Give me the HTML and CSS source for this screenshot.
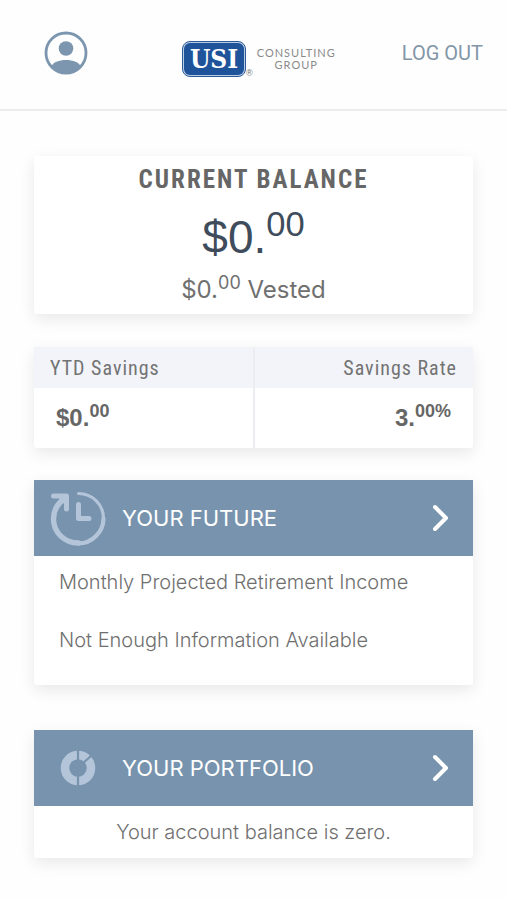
FILE: index.html
```html
<!DOCTYPE html>
<html lang="en">
<head>
<meta charset="utf-8">
<meta name="viewport" content="width=device-width, initial-scale=1">
<title>Account Summary</title>
<link rel="stylesheet" href="styles.css">
</head>
<body>
<header class="topbar">
  <a class="profile" href="#" aria-label="Profile">
    <svg viewBox="0 0 44 44" width="44" height="44" aria-hidden="true">
      <defs><clipPath id="disc"><circle cx="22" cy="22" r="20"/></clipPath></defs>
      <circle cx="22" cy="22" r="20" fill="none" stroke="#7b96ae" stroke-width="2.800"/>
      <circle cx="22" cy="17.500" r="7.300" fill="#7b96ae"/>
      <path clip-path="url(#disc)" fill="#7b96ae" d="M7 36C9 31 15 29 22 29S35 31 37 36V44H7Z"/>
    </svg>
  </a>
  <a class="brand" href="#">
    <span class="badge"><span class="badge-text">USI</span></span>
    <span class="mark">®</span>
    <span class="brand-name">CONSULTING<br>GROUP</span>
  </a>
  <a class="logout" href="#">LOG OUT</a>
</header>
<main class="content">
  <section class="card balance">
    <h1 class="balance-title">CURRENT BALANCE</h1>
    <p class="amount">$0.<span class="cents">00</span></p>
    <p class="vested">$0.<span class="cents">00</span> Vested</p>
  </section>
  <table class="card savings">
    <thead><tr><th scope="col">YTD Savings</th><th scope="col">Savings Rate</th></tr></thead>
    <tbody><tr><td>$0.<span class="cents">00</span></td><td>3.<span class="cents">00%</span></td></tr></tbody>
  </table>
  <section class="card future">
    <a class="panel-head" href="#">
      <span class="panel-icon">
        <svg viewBox="1 2 60 60" width="60" height="60" fill="none" stroke="#b4c5d9" stroke-linecap="round" stroke-linejoin="round" aria-hidden="true">
          <path stroke-width="3.200" d="M31.500 7.500C45 7.500 56.500 18 56.500 32.500"/>
          <path stroke-width="4.200" d="M56.500 32.500C56.500 46 45 57.500 31.500 57.500"/>
          <path stroke-width="5.400" d="M31.500 57C17 57 6.500 46 6.500 33C6.500 25 10 18 17 13"/>
          <path stroke-width="5" d="M6.500 10H19.500V23"/>
          <path fill="#b4c5d9" stroke="none" d="M10 10H20V21Z"/>
          <path stroke-width="5" d="M31.500 18.500V32.500H42"/>
        </svg>
      </span>
      <h2 class="panel-title">YOUR FUTURE</h2>
      <svg class="chevron" viewBox="0 0 18 30" width="18" height="30" aria-hidden="true"><path d="M4 4L15 15L4 26"/></svg>
    </a>
    <div class="panel-body">
      <p>Monthly Projected Retirement Income</p>
      <p>Not Enough Information Available</p>
    </div>
  </section>
  <section class="card portfolio">
    <a class="panel-head" href="#">
      <span class="panel-icon">
        <svg viewBox="0 0 36 36" width="36" height="36" aria-hidden="true">
          <circle cx="18" cy="18" r="13" fill="none" stroke="#b4c5d9" stroke-width="8.500"/>
          <path d="M18 0V10M18 26V36M22 14L32 5" stroke="#7793ad" stroke-width="2.200"/>
        </svg>
      </span>
      <h2 class="panel-title">YOUR PORTFOLIO</h2>
      <svg class="chevron" viewBox="0 0 18 30" width="18" height="30" aria-hidden="true"><path d="M4 4L15 15L4 26"/></svg>
    </a>
    <p class="portfolio-note">Your account balance is zero.</p>
  </section>
</main>
</body>
</html>
```
FILE: styles.css
```css
* { box-sizing: border-box; }
body {
  margin: 0;
  background: #fefefe;
  color: #666;
  font-family: "Liberation Sans", Arial, sans-serif;
}
h1, h2, p { margin: 0; font-weight: 400; }
a { color: inherit; text-decoration: none; }

.topbar {
  display: flex;
  align-items: center;
  justify-content: space-between;
  height: 111px;
  padding: 0 24px 4px 44px;
  border-bottom: 2px solid #ececec;
}
.profile, .profile svg { display: block; }
.brand { display: flex; align-items: center; margin: 12px 0 0 28px; }
.badge {
  padding: 1px;
  border: 1px solid #2b5a97;
  border-radius: 8px;
  background: #b9cde4;
}
.badge-text {
  display: block;
  width: 60px;
  height: 32px;
  border-radius: 6px;
  background: #1f549b;
  color: #fff;
  font: 700 26px/32px "DejaVu Serif Condensed", "DejaVu Serif", serif;
  text-align: center;
}
.mark { align-self: flex-end; margin-right: 4px; font-size: 9px; line-height: 8px; color: #777; }
.brand-name {
  font: 400 11px/12px Lato, sans-serif;
  letter-spacing: 1px;
  color: #8a8a8a;
  text-align: center;
}
.logout { font: 400 20px/24px Roboto, sans-serif; color: #8296a8; }

.content {
  display: flex;
  flex-direction: column;
  padding: 45px 34px 40px;
}
.card {
  background: #fff;
  border-radius: 3px;
  box-shadow: 0 5px 16px rgba(0, 0, 0, 0.09);
}

.balance { padding: 10px 0 6px; text-align: center; margin-bottom: 33px; }
.balance-title {
  font: 700 25px/28px "Roboto Condensed", "Liberation Sans Narrow", sans-serif;
  letter-spacing: 2px;
}
.amount { padding-top: 8px; font: 400 46px/70px "Liberation Sans", sans-serif; color: #3e4c5c; }
.vested { font: 400 24px/36px Inter, sans-serif; color: #707070; }
.cents { font-size: 75%; line-height: 1; vertical-align: 48%; }

.savings {
  width: 100%;
  border-collapse: collapse;
  table-layout: fixed;
  margin-bottom: 32px;
}
.savings th {
  height: 41px;
  padding: 0 16px;
  background: #f2f4f9;
  font: 400 20px/24px "Roboto Condensed", "Liberation Sans Narrow", sans-serif;
  letter-spacing: 1px;
  text-align: left;
  color: #737373;
}
.savings td { height: 60px; padding: 0 22px; font-size: 24px; line-height: 32px; font-weight: 700; }
.savings th:last-child, .savings td:last-child { border-left: 2px solid #ececf1; text-align: right; }

.panel-head {
  display: grid;
  grid-template-columns: 88px 1fr 18px;
  align-items: center;
  height: 76px;
  padding-right: 24px;
  background: #7793ad;
  color: #fff;
}
.panel-icon { display: flex; justify-content: center; }
.panel-title { font: 400 22px/28px Inter, sans-serif; }
.chevron { fill: none; stroke: #fff; stroke-width: 4px; stroke-linecap: round; stroke-linejoin: round; }
.future { margin-bottom: 45px; }
.panel-body { display: grid; gap: 30px; padding: 12px 25px 31px; }
.panel-body p, .portfolio-note { font: 300 20px/28px Inter, sans-serif; color: #6f6f6f; }
.portfolio-note { padding: 12px 0; text-align: center; }
```
